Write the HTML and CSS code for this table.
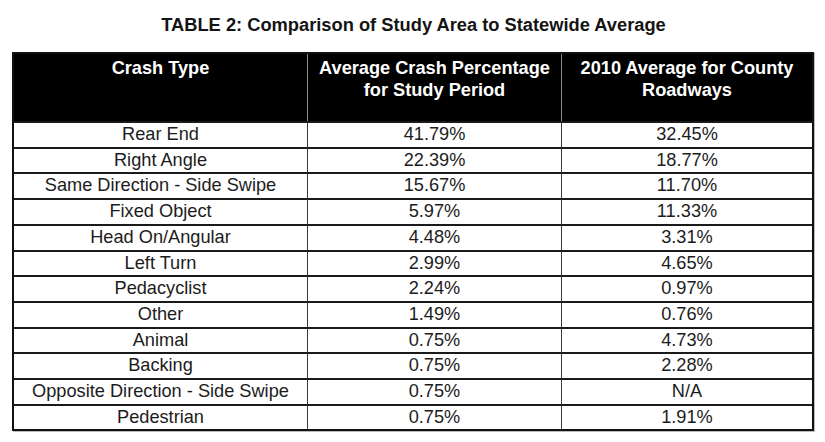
FILE: index.html
```html
<!DOCTYPE html>
<html lang="en">
<head>
<meta charset="utf-8">
<title>TABLE 2: Comparison of Study Area to Statewide Average</title>
<link rel="stylesheet" href="styles.css">
</head>
<body>
<main class="page">
  <h1 class="title">TABLE 2: Comparison of Study Area to Statewide Average</h1>
  <table class="crash-table">
    <colgroup>
      <col class="c1">
      <col class="c2">
      <col class="c3">
    </colgroup>
    <thead>
      <tr>
        <th>Crash Type</th>
        <th>Average Crash Percentage<br>for Study Period</th>
        <th>2010 Average for County<br>Roadways</th>
      </tr>
    </thead>
    <tbody>
      <tr><td>Rear End</td><td>41.79%</td><td>32.45%</td></tr>
      <tr><td>Right Angle</td><td>22.39%</td><td>18.77%</td></tr>
      <tr><td>Same Direction - Side Swipe</td><td>15.67%</td><td>11.70%</td></tr>
      <tr><td>Fixed Object</td><td>5.97%</td><td>11.33%</td></tr>
      <tr><td>Head On/Angular</td><td>4.48%</td><td>3.31%</td></tr>
      <tr><td>Left Turn</td><td>2.99%</td><td>4.65%</td></tr>
      <tr><td>Pedacyclist</td><td>2.24%</td><td>0.97%</td></tr>
      <tr><td>Other</td><td>1.49%</td><td>0.76%</td></tr>
      <tr><td>Animal</td><td>0.75%</td><td>4.73%</td></tr>
      <tr><td>Backing</td><td>0.75%</td><td>2.28%</td></tr>
      <tr><td>Opposite Direction - Side Swipe</td><td>0.75%</td><td>N/A</td></tr>
      <tr><td>Pedestrian</td><td>0.75%</td><td>1.91%</td></tr>
    </tbody>
  </table>
</main>
</body>
</html>
```

FILE: styles.css
```css
html, body {
  margin: 0;
  padding: 0;
  background: #ffffff;
}

.page {
  width: 825px;
  height: 442px;
  overflow: hidden;
  font-family: "Liberation Sans", Arial, sans-serif;
  color: #1c1c1c;
}

.title {
  margin: 14px 0 0 0;
  font-size: 18.3px;
  line-height: 22px;
  font-weight: bold;
  text-align: center;
  color: #141414;
  padding-left: 2px;
}

.crash-table {
  margin: 16px 0 0 12px;
  width: 802px;
  table-layout: fixed;
  border-collapse: separate;
  border-spacing: 0;
  border: 2px solid #111111;
  box-shadow: 1px 1px 0 #bdbdbd;
  font-size: 18.2px;
}

.c1 { width: 293px; }
.c2 { width: 254px; }
.c3 { width: 251px; }

.crash-table th {
  background: #000000;
  color: #ffffff;
  font-weight: bold;
  vertical-align: top;
  text-align: center;
  line-height: 21.5px;
  height: 63px;
  padding: 4px 0 0 0;
}

.crash-table th + th {
  border-left: 1px solid #8c8c8c;
}

.crash-table td {
  border-top: 2px solid #1a1a1a;
  text-align: center;
  line-height: 23.7px;
  height: 23.7px;
  padding: 0;
  white-space: nowrap;
}

.crash-table td + td {
  border-left: 1.5px solid #3a3a3a;
}
```
